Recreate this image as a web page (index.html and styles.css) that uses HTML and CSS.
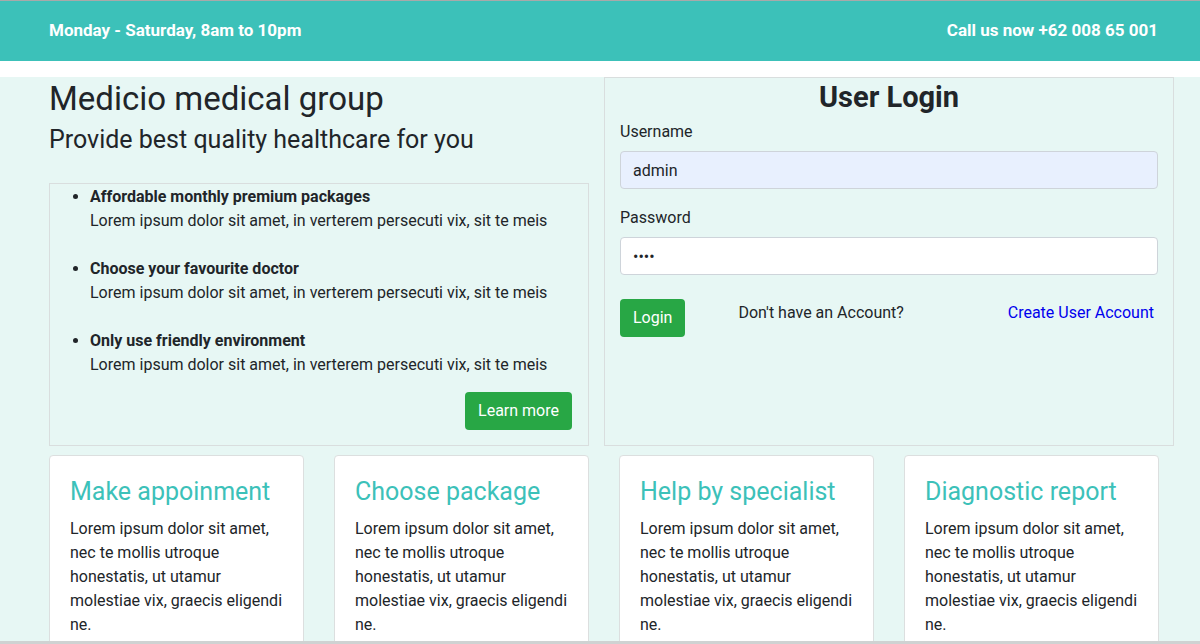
FILE: index.html
```html
<!DOCTYPE html>
<html lang="en">
<head>
<meta charset="utf-8">
<title>Medicio</title>
<link rel="stylesheet" href="styles.css">
</head>
<body>
<header class="topbar">
  <div class="topbar-inner">
    <span>Monday - Saturday, 8am to 10pm</span>
    <span>Call us now +62 008 65 001</span>
  </div>
</header>
<main class="main">
  <div class="hero-row">
    <section class="intro">
      <h1 class="intro-title">Medicio medical group</h1>
      <h2 class="intro-sub">Provide best quality healthcare for you</h2>
      <div class="feature-box">
        <ul class="feature-list">
          <li><strong>Affordable monthly premium packages</strong><span>Lorem ipsum dolor sit amet, in verterem persecuti vix, sit te meis</span></li>
          <li><strong>Choose your favourite doctor</strong><span>Lorem ipsum dolor sit amet, in verterem persecuti vix, sit te meis</span></li>
          <li><strong>Only use friendly environment</strong><span>Lorem ipsum dolor sit amet, in verterem persecuti vix, sit te meis</span></li>
        </ul>
        <div class="feature-actions"><a class="btn btn-green" href="#">Learn more</a></div>
      </div>
    </section>
    <section class="login">
      <h2 class="login-title">User Login</h2>
      <form class="login-form">
        <label class="field-label" for="u">Username</label>
        <input class="field field-autofill" id="u" type="text" value="admin">
        <label class="field-label" for="p">Password</label>
        <input class="field" id="p" type="password" value="1234">
        <div class="login-actions">
          <button class="btn btn-green" type="button">Login</button>
          <span class="no-account">Don't have an Account?</span>
          <a class="create-link" href="#">Create User Account</a>
        </div>
      </form>
    </section>
  </div>
  <div class="cards">
    <div class="card"><h3 class="card-title">Make appoinment</h3><p class="card-text">Lorem ipsum dolor sit amet, nec te mollis utroque honestatis, ut utamur molestiae vix, graecis eligendi ne.</p></div>
    <div class="card"><h3 class="card-title">Choose package</h3><p class="card-text">Lorem ipsum dolor sit amet, nec te mollis utroque honestatis, ut utamur molestiae vix, graecis eligendi ne.</p></div>
    <div class="card"><h3 class="card-title">Help by specialist</h3><p class="card-text">Lorem ipsum dolor sit amet, nec te mollis utroque honestatis, ut utamur molestiae vix, graecis eligendi ne.</p></div>
    <div class="card"><h3 class="card-title">Diagnostic report</h3><p class="card-text">Lorem ipsum dolor sit amet, nec te mollis utroque honestatis, ut utamur molestiae vix, graecis eligendi ne.</p></div>
  </div>
</main>
</body>
</html>
```
FILE: styles.css
```css
* { box-sizing: border-box; }
html, body { margin: 0; padding: 0; }
body {
  font-family: Roboto, "Noto Sans", sans-serif;
  font-size: 16px;
  line-height: 24px;
  color: #212529;
  background: #e7f7f4;
  overflow: hidden;
  height: 644px;
}
body::after {
  content: "";
  position: fixed;
  left: 0;
  right: 0;
  bottom: 0;
  height: 3px;
  background: #cfd2d2;
}
.topbar {
  background: #3cc1b9;
  border-top: 1px solid #a9a9a9;
  height: 61px;
  margin-bottom: 16px;
  box-shadow: 0 16px 0 #fff;
}
.topbar-inner {
  display: flex;
  justify-content: space-between;
  align-items: center;
  height: 58px;
  padding: 0 42px 0 49px;
  color: #fff;
  font-weight: 700;
  font-size: 17px;
}
.main { padding: 0 26px 0 49px; }
.hero-row { display: flex; gap: 15px; align-items: stretch; }
.intro { width: 540px; }
.intro-title { margin: 2px 0 0; font-size: 33px; font-weight: 400; line-height: 40px; }
.intro-sub { margin: 0; padding-top: 1px; font-size: 25px; font-weight: 400; line-height: 40px; }
.feature-box {
  margin-top: 23px;
  border: 1px solid #d9dede;
  padding: 1px 16px 15px 0;
}
.feature-list { margin: 0; padding-left: 40px; }
.feature-list li { margin-bottom: 24px; }
.feature-list li:last-child { margin-bottom: 0; }
.feature-list strong, .feature-list span { display: block; }
.feature-list strong { font-weight: 700; }
.feature-actions { display: flex; justify-content: flex-end; margin-top: 15px; }
.btn {
  display: inline-block;
  border: 0;
  border-radius: 4px;
  padding: 7px 13px;
  font: inherit;
  line-height: 24px;
  color: #fff;
  text-decoration: none;
  cursor: pointer;
}
.btn-green { background: #28a745; }
.login {
  width: 570px;
  border: 1px solid #d9dede;
  padding: 0 15px;
}
.login-title { margin: 2px 0 5px; text-align: center; font-size: 29px; font-weight: 700; line-height: 34px; }
.login-form { display: flex; flex-direction: column; }
.field-label { line-height: 24px; padding-top: 1px; margin-bottom: 7px; }
.field {
  height: 38px;
  border: 1px solid #ced4da;
  border-radius: 4px;
  padding: 6px 12px;
  font: inherit;
  color: #212529;
  background: #fff;
  margin-bottom: 16px;
}
.field-autofill { background: #e8f0fe; }
.login-actions { display: flex; align-items: flex-start; margin-top: 8px; }
.no-account { margin-left: 53px; line-height: 26px; padding-top: 1px; }
.create-link { margin-left: auto; margin-right: 4px; color: #0000ee; text-decoration: none; line-height: 26px; padding-top: 1px; }
.cards { display: flex; gap: 30px; margin-top: 9px; }
.card {
  flex: 0 0 255px;
  background: #fff;
  border: 1px solid #dcdfdf;
  border-radius: 4px;
  padding: 21px 20px 20px;
  height: 300px;
}
.card-title { margin: 0 0 11px; color: #3cc1b9; font-size: 25px; font-weight: 400; line-height: 29px; }
.card-text { margin: 0; }
```
